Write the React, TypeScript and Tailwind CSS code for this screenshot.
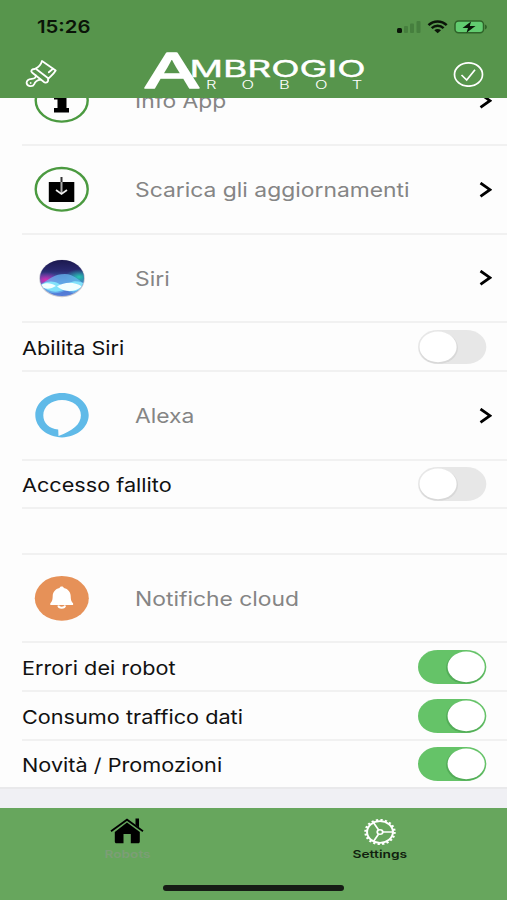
import React from 'react';

interface RowProps {
  label: string;
  height: string;
}

interface LinkRowProps extends RowProps {
  icon: React.ReactNode;
  chevron?: boolean;
}

interface SwitchRowProps extends RowProps {
  on?: boolean;
}

const InfoIcon = () => (
  <svg width="56" height="46" viewBox="0 0 56 46">
    <ellipse cx="27.7" cy="23.3" rx="26" ry="21.3" fill="none" stroke="#4b9a40" strokeWidth="2.4" />
    <ellipse cx="27.500" cy="12.5" rx="4.5" ry="3" />
    <path d="M20 18h12.500v13h2.500v4.500h-15v-4.500h3.500v-8.500h-3.500z" />
  </svg>
);

const DownloadIcon = () => (
  <svg width="56" height="46" viewBox="0 0 56 46">
    <ellipse cx="27.7" cy="23.3" rx="26" ry="21.3" fill="none" stroke="#4b9a40" strokeWidth="2.4" />
    <path d="M14.800 16h25.500v20H14.800z" />
    <path d="M27.500 11v5" stroke="#333" strokeWidth="2" />
    <path d="M27.500 16v11.500" fill="none" stroke="#aaa" strokeWidth="2" />
    <path d="M22 24l5.500 4 5.500-4" fill="none" stroke="#eee" strokeWidth="1.700" />
  </svg>
);

const SiriIcon = () => (
  <svg width="56" height="46" viewBox="0 0 56 46">
    <defs>
      <linearGradient id="siri" x1="0" y1="0" x2="0" y2="1">
        <stop offset="0" stopColor="#15103f" />
        <stop offset="0.35" stopColor="#2a2a70" />
        <stop offset="0.6" stopColor="#4a78c8" />
        <stop offset="1" stopColor="#5b7fe0" />
      </linearGradient>
      <radialGradient id="siriPink">
        <stop offset="0" stopColor="#e02bb0" />
        <stop offset="1" stopColor="#a020b0" stopOpacity="0" />
      </radialGradient>
      <radialGradient id="siriTeal">
        <stop offset="0" stopColor="#25c8b0" />
        <stop offset="1" stopColor="#25a0b0" stopOpacity="0" />
      </radialGradient>
      <clipPath id="siriClip">
        <ellipse cx="28" cy="23" rx="22" ry="18" />
      </clipPath>
    </defs>
    <ellipse cx="28" cy="23.500" rx="22.800" ry="18.800" fill="#c4c4cf" />
    <g clipPath="url(#siriClip)">
      <rect width="56" height="46" fill="url(#siri)" />
      <ellipse cx="12" cy="25" rx="15" ry="8" fill="url(#siriPink)" />
      <ellipse cx="45" cy="22" rx="14" ry="8" fill="url(#siriTeal)" />
      <path d="M6 30C17 23 20 19 31 19c9 0 14 7 20 10v5c-9 5-13 5-19 1-9 5-14 4-26-1z" fill="#67b5f0" opacity=".75" />
      <path d="M6 30c12-7 18-2 24 2 10-10 18-4 21-3-5 9-14 8-20 5-9 5-16 3-25-4z" fill="#82e2fa" />
      <path d="M5 31c7-4 12-3 17 0-5 3-10 4-17 0zM23 31.500c8-5 17-5 25 0-8 6-17 6-25 0z" fill="#f2ffff" />
    </g>
  </svg>
);

const AlexaIcon = () => (
  <svg width="56" height="46" viewBox="0 0 56 46">
    <path
      fill="#60bae8"
      fillRule="evenodd"
      d="M28 1C13.300 1 1.300 10.900 1.300 23.100S13.300 45.400 28 45.400s26.700-10.100 26.700-22.300S42.700 1 28 1zM28 8c10.600 0 18.900 6.500 18.900 15.300 0 9-8.200 15.500-22.400 20.800l-.3-6.500C15 36.600 9.300 31.300 9.300 23.300 9.300 14.500 17.500 8 28 8z"
    />
  </svg>
);

const BellIcon = () => (
  <svg width="56" height="46" viewBox="0 0 56 46">
    <ellipse cx="27.800" cy="23.300" rx="27" ry="22.400" fill="#e69158" />
    <path
      fill="#fff"
      d="M27.700 11.500c1.300 0 2 .6 2.200 1.500 4.300 1 6.600 4 6.800 8 .1 4.500.8 5.800 2.400 7.200V30H16.300v-1.800c1.600-1.400 2.300-2.700 2.400-7.200.2-4 2.500-7 6.800-8 .2-.9.900-1.500 2.200-1.500z"
    />
    <path d="M24.200 30.500c.5 3 6.500 3 7 0" fill="none" stroke="#fff" strokeWidth="1.800" />
  </svg>
);

const Chevron = () => (
  <svg className="mr-[15px] ml-auto shrink-0" width="13" height="16" viewBox="0 0 13 16">
    <path d="M1.500 1L11 7.700l-9.500 6.700" fill="none" stroke="#000" strokeWidth="2.800" />
  </svg>
);

const LinkRow: React.FC<LinkRowProps> = ({ icon, label, height, chevron = true }) => (
  <li className={`ml-[22px] flex shrink-0 items-center border-b-2 border-[#f1f1f1] ${height}`}>
    <div className="ml-[11.5px] w-[101.5px] shrink-0 pb-px">{icon}</div>
    <span className="origin-left scale-x-[1.172] pt-[3px] text-[19.5px] leading-none whitespace-nowrap text-[#858585]">{label}</span>
    {chevron && <Chevron />}
  </li>
);

const Toggle: React.FC<{ on?: boolean }> = ({ on }) => (
  <svg className="mr-5 ml-auto shrink-0" width="70" height="36" viewBox="0 0 70 36">
    <path d="M21 .9h28c11.500 0 20.300 7.300 20.300 17.100s-8.800 17.100-20.300 17.100H21C9.500 35.100 1 27.800 1 18S9.500.9 21 .9z" fill={on ? '#65c368' : '#e7e7e7'} />
    <ellipse cx={on ? 48.5 : 21.5} cy="19" rx="19.500" ry="15.800" fill={on ? '#53ad58' : '#d8d8d8'} />
    <ellipse cx={on ? 49.2 : 21} cy="17.900" rx="18.600" ry="15.300" fill="#fff" />
  </svg>
);

const SwitchRow: React.FC<SwitchRowProps> = ({ label, height, on }) => (
  <li className={`ml-[22px] flex shrink-0 items-center border-b-2 border-[#f1f1f1] last:ml-0 last:border-[#e9e9eb] last:pl-[22px] ${height}`}>
    <span className="origin-left scale-x-[1.140] pt-[3px] text-[19px] leading-none whitespace-nowrap text-[#111]">{label}</span>
    <Toggle on={on} />
  </li>
);

const StatusIcons = () => (
  <svg width="91" height="16" viewBox="0 0 91 16">
    <rect x="0" y="9" width="5" height="5" rx="1.500" fill="#0a1408" />
    <rect x="7" y="7" width="4" height="7" rx="1" fill="#467f3e" />
    <rect x="13" y="4.500" width="4" height="9.500" rx="1" fill="#467f3e" />
    <rect x="19.500" y="2" width="4" height="12" rx="1" fill="#467f3e" />
    <path d="M31.500 6.200c5.200-5 13-5 18.200 0M34.700 9.200c3.400-3.200 8.500-3.200 11.900 0" fill="none" stroke="#0a1408" strokeWidth="2.500" />
    <path d="M37.300 11.200c2-1.700 4.700-1.700 6.700 0L40.700 14.200z" fill="#0a1408" />
    <rect x="58" y="2" width="28.500" height="11.800" rx="3.500" fill="#62cc70" stroke="#2f6329" strokeWidth="1.500" />
    <path d="M88 5.500c2.500 1 2.500 4 0 5z" fill="#2f6329" />
    <path d="M74 2.500l-8.500 6.500h5.500l-1.500 4.800 9-6.800h-5.700z" fill="#0a1408" />
  </svg>
);

const BrushIcon = () => (
  <svg width="34" height="32" viewBox="0 0 34 32" fill="none" stroke="#fff" strokeWidth="1.800" strokeLinejoin="round" strokeLinecap="round">
    <path d="M17 2l13.700 9.500c-1.700 3-4.200 5-7.200 8L10.500 9.500C14 8 16 5.500 17 2z" />
    <path d="M23.800 13.300l4.200-3.500" />
    <path d="M9.500 10c-3.200.2-4.200 2.200-2.200 3.700l12 9.500c2.500 1.200 4.500-.6 3.700-3.200" />
    <path d="M10.800 16.300c.2 2.300-1.200 3.300-4 3.500-3.200.3-5.200 1.800-5.200 4 0 3.800 6.200 4.500 7.600 1.300.8-2.400 2.800-4 6.500-4.500" />
    <circle cx="5.500" cy="24" r=".4" strokeWidth="1" />
  </svg>
);

const Logo = () => (
  <svg className="overflow-visible" width="224" height="42" viewBox="0 0 224 42" fill="#fff" fontFamily="Inter, sans-serif">
    <text x="-.5" y="34.300" fontSize="47.500" fontWeight="400" textLength="57" lengthAdjust="spacingAndGlyphs" stroke="#fff" strokeWidth="1.600" strokeLinejoin="round">A</text>
    <text x="45.500" y="23" fontSize="22.500" fontWeight="400" textLength="176" lengthAdjust="spacingAndGlyphs" stroke="#fff" strokeWidth=".4">MBROGIO</text>
    <g transform="scale(1.500 1)">
      <text x="41.300 65 90 114 138.500" y="35.300" fontSize="11" fontWeight="300">ROBOT</text>
    </g>
  </svg>
);

const CheckIcon = () => (
  <svg width="31" height="26" viewBox="0 0 31 26" fill="none" stroke="#fff" strokeWidth="1.700">
    <ellipse cx="15.500" cy="13.500" rx="14" ry="11.700" />
    <path d="M8.500 14l5.200 5L22 8.700" />
  </svg>
);

const HomeIcon = () => (
  <svg width="34" height="26" viewBox="0 0 34 26">
    <path d="M1 13.200L17 1.700l16 11.500" fill="none" stroke="#000" strokeWidth="1.800" />
    <path d="M25.500.5h3.500v9l-3.500-2.600zM17 4.600l12.800 9.300v9.600c0 1.200-.6 1.800-1.800 1.800h-7.200v-9.300h-7.300v9.300H6.600c-1.200 0-1.800-.6-1.800-1.800v-9.600z" />
  </svg>
);

const GearIcon = () => (
  <svg width="34" height="28" viewBox="-17 -14 34 28" fill="none" stroke="#fff">
    <g transform="scale(1.200 1)">
      <circle r="10.800" strokeWidth="1.700" />
      <circle r="12.100" strokeWidth="2" strokeDasharray="1.900 1.900" />
      <circle r="2.300" strokeWidth="1.500" />
      <path d="M2.400 0h8M-1.200-2.100l-4.200-7.200M-1.200 2.100l-4.200 7.200" strokeWidth="1.500" />
    </g>
  </svg>
);

export default function App() {
  return (
    <div className="flex h-[900px] w-[507px] flex-col overflow-hidden bg-[#fdfdfd] font-['Inter',sans-serif]">
      {/* Header */}
      <header className="z-10 flex h-[98px] shrink-0 flex-col bg-[#57954c]">
        <div className="flex h-[52px] items-center justify-between pt-px pr-[19px] pl-[37px]">
          <span className="origin-left scale-x-[1.160] pt-px text-[17.5px] font-semibold text-[#0a1408]">15:26</span>
          <StatusIcons />
        </div>
        <div className="flex h-[46px] items-center justify-between pr-[23px] pl-[25px]">
          <BrushIcon />
          <Logo />
          <div className="pb-[2px]">
            <CheckIcon />
          </div>
        </div>
      </header>

      {/* Settings list, scrolled under the header */}
      <ul className="-mt-[41px] flex shrink-0 flex-col">
        <LinkRow icon={<InfoIcon />} label="Info App" height="h-[89px]" />
        <LinkRow icon={<DownloadIcon />} label="Scarica gli aggiornamenti" height="h-[89px]" />
        <LinkRow icon={<SiriIcon />} label="Siri" height="h-[88px]" />
        <SwitchRow label="Abilita Siri" height="h-[49px]" />
        <LinkRow icon={<AlexaIcon />} label="Alexa" height="h-[89px]" />
        <SwitchRow label="Accesso fallito" height="h-[48px]" />
        <li className="ml-[22px] h-[46px] shrink-0 border-b-2 border-[#f1f1f1]" />
        <LinkRow icon={<BellIcon />} label="Notifiche cloud" height="h-[88px]" chevron={false} />
        <SwitchRow label="Errori dei robot" height="h-[49px]" on />
        <SwitchRow label="Consumo traffico dati" height="h-[49px]" on />
        <SwitchRow label="Novità / Promozioni" height="h-[48px]" on />
      </ul>
      <div className="flex-1 bg-[#f0f0f4]" />

      {/* Tab bar */}
      <nav className="flex h-[92px] shrink-0 flex-col items-center bg-[#67a65d]">
        <div className="flex h-[77px] w-full">
          <div className="flex w-[254px] flex-col items-center pt-[10px]">
            <HomeIcon />
            <span className="mt-[3px] ml-px scale-x-[1.240] text-[11px] leading-[14px] font-semibold text-[#7c9e76]">Robots</span>
          </div>
          <div className="flex w-[253px] flex-col items-center pt-[10px] pr-px">
            <GearIcon />
            <span className="mt-px scale-x-[1.250] text-[11px] leading-[14px] font-semibold text-[#10200e]">Settings</span>
          </div>
        </div>
        <div className="h-[6px] w-[181px] rounded-full bg-[#161c15]" />
      </nav>
    </div>
  );
}
